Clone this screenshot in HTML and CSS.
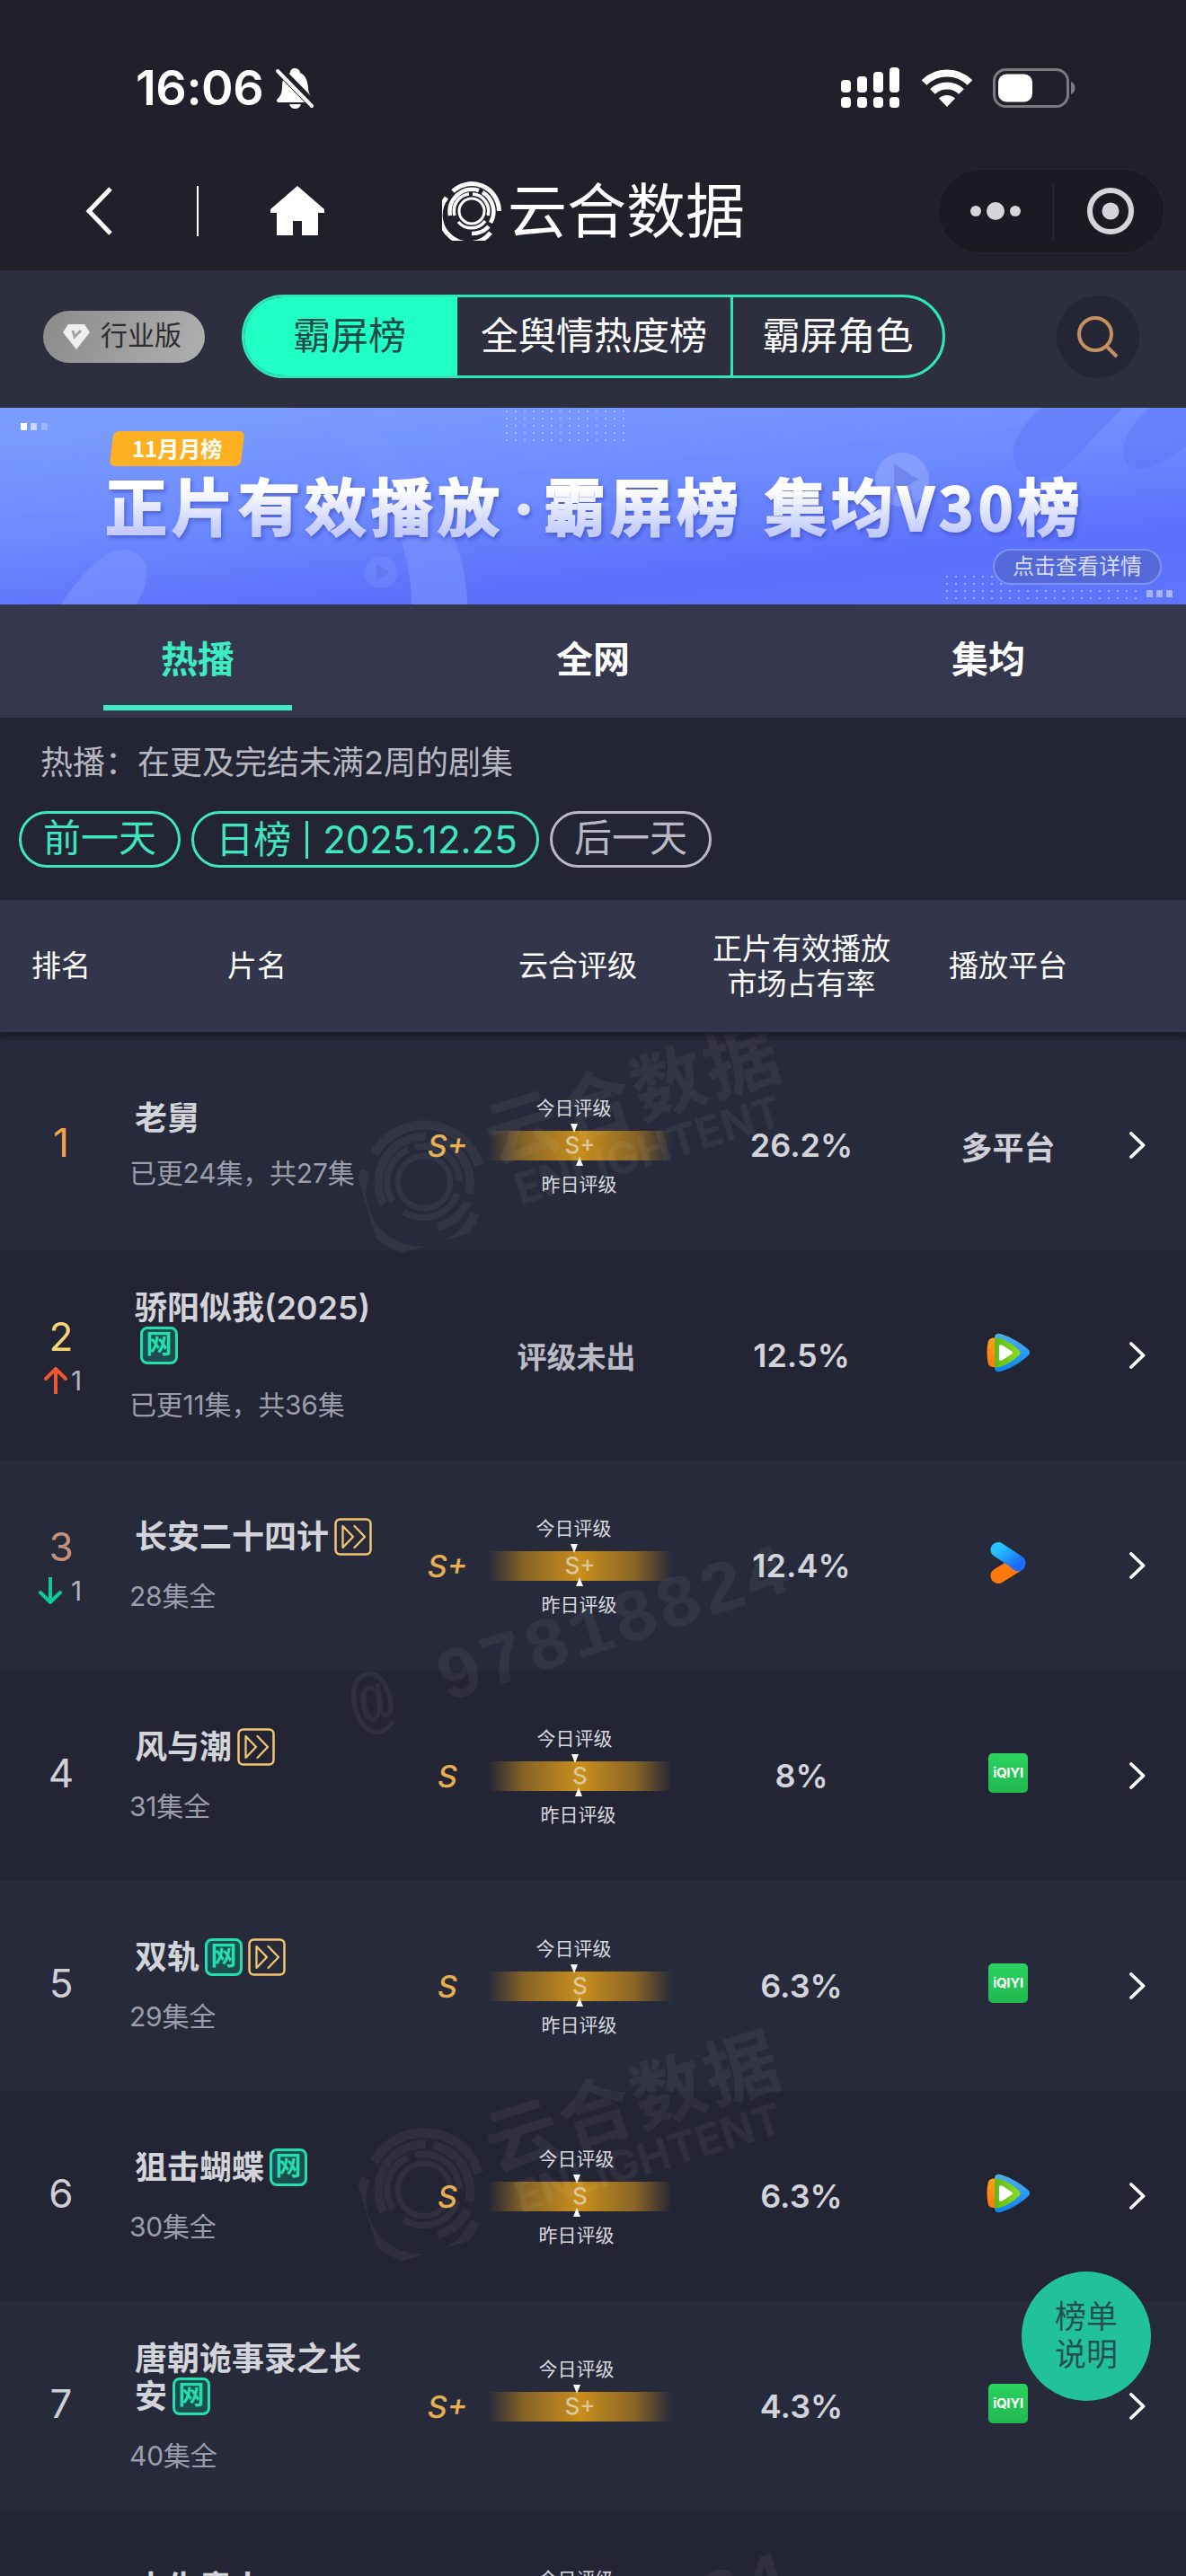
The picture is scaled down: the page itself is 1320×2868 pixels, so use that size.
FILE: index.html
```html
<!DOCTYPE html>
<html lang="zh-CN">
<head>
<meta charset="utf-8">
<title>云合数据</title>
<link rel="stylesheet" href="styles.css">
</head>

<body>
<!-- shared icons -->
<svg class="defs" width="0" height="0">
	<defs>
		<linearGradient id="blue" x1="0" y1="0" x2="0" y2="1"><stop offset="0" stop-color="#4fb0e8"/><stop offset="1" stop-color="#0a84f5"/></linearGradient>
		<linearGradient id="orange" x1="0" y1="0" x2="0" y2="1"><stop offset="0" stop-color="#ffa31a"/><stop offset="1" stop-color="#ff7410"/></linearGradient>
		<linearGradient id="lime" x1="0" y1="0" x2="1" y2="0"><stop offset="0" stop-color="#5cb81c"/><stop offset="1" stop-color="#8fdc1e"/></linearGradient>
		<linearGradient id="youku" x1="0" y1="0" x2="1" y2="1"><stop offset="0" stop-color="#25c4fa"/><stop offset="1" stop-color="#1a6cff"/></linearGradient>
	</defs>
	<symbol id="rings" viewBox="0 0 66 66">
		<g fill="none" stroke="currentColor">
			<path stroke-width="5" d="M12 11A30.500 30.500 0 0 1 63.500 33M5 18A31 31 0 0 0 54 57"/>
			<path stroke-width="4.500" d="M15 17A24 24 0 0 1 41 10M45 12A25 25 0 0 1 54 46M9 38A24 24 0 0 1 15 17M33 58A25 25 0 0 0 52 50"/>
			<path stroke-width="3.500" d="M14 38A19 19 0 0 1 30 14M34 14A19 19 0 0 1 51 38M18 45A19 19 0 0 0 48 44"/>
			<circle cx="33" cy="33" r="14" stroke-width="3"/>
		</g>
	</symbol>
	<symbol id="tencent" viewBox="0 0 48 44">
		<path fill="url(#blue)" d="M9 5C9 1 13 0 17 1.500C28 5 38 11 46 18C49 20.500 49 23 46 25.500C38 33 28 39 17 42.500C13 44 9 43 9 39Z"/>
		<path fill="url(#orange)" d="M2 9C4 5 8 5 12 6L15 37C11 39 4 39 2 35C0 27 0 17 2 9Z"/>
		<path fill="url(#lime)" d="M9 8C9 5 12 5 15 6C23 9 30 13 36 19C38 21 38 23 36 25C30 31 23 35 15 38C12 39 9 39 9 36Z"/>
		<path fill="#fff" d="M14 15C14 13 16 13 18 14L28 20.500C29.500 21.500 29.500 22.500 28 23.500L18 30C16 31 14 31 14 29Z"/>
	</symbol>
	<symbol id="yk" viewBox="0 0 40 48">
		<path fill="none" stroke="#ff7a0c" stroke-width="17" stroke-linecap="round" d="M9 38.500L29 26"/>
		<path fill="none" stroke="url(#youku)" stroke-width="17" stroke-linecap="round" stroke-linejoin="round" d="M9 9.500L31 24L31 25"/>
	</symbol>
	<symbol id="more" viewBox="0 0 18 30">
		<path fill="none" stroke="#fff" stroke-width="3.800" stroke-linecap="round" stroke-linejoin="round" d="M2 2L15.500 15L2 28"/>
	</symbol>
	<symbol id="ff" viewBox="0 0 42 42">
		<rect x="1.500" y="1.500" width="39" height="39" rx="5" fill="none" stroke="#f2c671" stroke-width="2.500"/>
		<path fill="none" stroke="#f2c671" stroke-width="2.300" stroke-linejoin="round" stroke-linecap="round" d="M9.500 9V33L21 21ZM22.500 9L34 21L22.500 33"/>
	</symbol>
</svg>

<div class="header">
	<div class="status">
		<span class="time">16:06</span>
		<svg class="bell" width="46" height="46" viewBox="0 0 46 46">
			<path fill="#fff" d="M23 1C27 1 29 4 29 6C36 9 37 16 38 22C38 29 41 32 43 35C44 37 43 39 41 39H6C3 39 2 37 4 35C8 31 9 27 9 21C9 13 12 8 18 6C18 3 20 1 23 1ZM17 41H30C29 44 27 46 23.500 46C20 46 18 44 17 41Z"/>
			<path stroke="#20202a" stroke-width="10" d="M3 0L44 42"/>
			<path stroke="#fff" stroke-width="4" stroke-linecap="round" d="M4 4L42 43"/>
		</svg>
		<svg class="signal" width="67" height="46" viewBox="0 0 67 46" fill="#fff">
			<rect x="0" y="14" width="11" height="14" rx="4"/><rect x="18" y="10" width="11" height="18" rx="4"/><rect x="36" y="5" width="11" height="23" rx="4"/><rect x="54" y="0" width="11" height="28" rx="4"/>
			<rect x="0" y="33" width="11" height="12" rx="4"/><rect x="18" y="33" width="11" height="12" rx="4"/><rect x="36" y="33" width="11" height="12" rx="4"/><rect x="54" y="33" width="11" height="12" rx="4"/>
		</svg>
		<svg class="wifi" width="58" height="42" viewBox="0 0 58 42">
			<g fill="none" stroke="#fff" stroke-width="8"><path d="M3.500 15A36 36 0 0 1 54.500 15"/><path d="M13 25A23 23 0 0 1 45 25"/></g>
			<path fill="#fff" d="M29 42L20 32.500A13 13 0 0 1 38 32.500Z"/>
		</svg>
		<svg class="battery" width="92" height="44" viewBox="0 0 92 44">
			<rect x="1.500" y="1.500" width="82" height="41" rx="13" fill="none" stroke="#7b7b82" stroke-width="3"/>
			<rect x="6" y="6.500" width="38" height="31" rx="9" fill="#fff"/>
			<path fill="#7b7b82" d="M87 15C93 17 93 27 87 29Z"/>
		</svg>
	</div>
	<div class="nav">
		<svg class="back" width="30" height="54" viewBox="0 0 30 54"><path fill="none" stroke="#fff" stroke-width="5" d="M28 2L4 27L28 52"/></svg>
		<span class="line"></span>
		<svg class="home" width="62" height="56" viewBox="0 0 62 56"><path fill="#fff" d="M31 0L61 26V30H54V55H36V39H26V55H8V30H1V26Z"/></svg>
		<svg class="logo" width="66" height="66"><use href="#rings"/></svg>
		<span class="brand">云合数据</span>
		<div class="capsule">
			<svg width="56" height="22" viewBox="0 0 56 22" fill="#d6d6da"><circle cx="6" cy="11" r="6"/><circle cx="28" cy="11" r="10"/><circle cx="50" cy="11" r="6"/></svg>
			<span class="split"></span>
			<svg width="54" height="54" viewBox="0 0 54 54"><circle cx="27" cy="27" r="23" fill="none" stroke="#d6d6da" stroke-width="6"/><circle cx="27" cy="27" r="9.500" fill="#d6d6da"/></svg>
		</div>
	</div>
</div>

<div class="toolbar">
	<div class="edition">
		<svg width="32" height="30" viewBox="0 0 32 30"><path fill="#efefef" d="M7 1H25L31 10L16 29L1 10Z"/><path fill="none" stroke="#a2a2a2" stroke-width="3" d="M12 8L14 15L21 8"/></svg>
		<span>行业版</span>
	</div>
	<div class="segment">
		<span class="seg seg1 on">霸屏榜</span>
		<span class="seg seg2">全舆情热度榜</span>
		<span class="seg seg3">霸屏角色</span>
	</div>
	<div class="search">
		<svg width="48" height="48" viewBox="0 0 48 48"><g fill="none" stroke="#c5905f" stroke-width="4"><circle cx="21" cy="21" r="18"/><path d="M33 34L45 46"/></g></svg>
	</div>
</div>

<div class="banner">
	<svg class="art" width="1320" height="219" viewBox="0 0 1320 219">
		<defs>
			<pattern id="dots" width="10" height="8" patternUnits="userSpaceOnUse"><rect x="3" y="3" width="2" height="2" fill="#a9bcff"/></pattern>
		</defs>
		<path fill="#5c78f5" opacity=".55" d="M1160 0C1130 25 1120 50 1134 70C1150 88 1180 75 1200 52C1225 25 1240 10 1250 0ZM1280 0C1250 25 1245 50 1255 64C1270 76 1300 60 1320 42V0Z"/>
		<path fill="#7b94ff" opacity=".6" d="M68 219C80 200 105 168 125 160C155 152 168 172 162 195C160 205 155 212 152 219ZM445 145H505C515 170 520 195 520 219H458C458 190 452 165 445 145Z"/>
		<path fill="#7b98ff" opacity=".35" d="M320 0H410C430 45 480 90 505 145H445C430 90 400 40 320 0Z"/>
		<circle cx="1004" cy="80" r="30" fill="#9cb2ff" opacity=".5"/>
		<path fill="#6f86f0" d="M995 62L1022 80L995 95Z"/>
		<circle cx="424" cy="183" r="18" fill="#7b90ff" opacity=".4"/>
		<path fill="#6378ee" d="M419 174L434 183L419 192Z"/>
		<rect x="555" y="0" width="141" height="40" fill="url(#dots)" opacity=".8"/>
		<rect x="1048" y="186" width="218" height="28" fill="url(#dots)" opacity=".8"/>
		<rect x="23" y="17" width="7" height="8" fill="#fff"/><rect x="34" y="17" width="7" height="8" fill="#fff" opacity=".6"/><rect x="46" y="17" width="7" height="8" fill="#fff" opacity=".25"/>
		<rect x="1276" y="203" width="7" height="8" fill="#fff" opacity=".45"/><rect x="1287" y="203" width="7" height="8" fill="#fff" opacity=".45"/><rect x="1298" y="203" width="7" height="8" fill="#fff" opacity=".45"/>
	</svg>
	<div class="month"><span>11月月榜</span></div>
	<div class="slogan">正片有效播放<i>·</i>霸屏榜<b></b>集均<em>V30</em>榜</div>
	<div class="detail">点击查看详情</div>
</div>

<div class="tabs">
	<div class="tab on"><span>热播</span></div>
	<div class="tab"><span>全网</span></div>
	<div class="tab"><span>集均</span></div>
</div>

<div class="filter">
	<div class="note">热播：在更及完结未满2周的剧集</div>
	<div class="days">
		<span class="day">前一天</span>
		<span class="day date">日榜<i></i>2025.12.25</span>
		<span class="day off">后一天</span>
	</div>
</div>

<div class="thead">
	<span>排名</span>
	<span>片名</span>
	<span class="th-grade">云合评级</span>
	<span>正片有效播放<br>市场占有率</span>
	<span>播放平台</span>
</div>

<div class="list">
	<div class="row">
		<div class="rank r1">1</div>
		<div class="name plain"><h3>老舅</h3><p>已更24集，共27集</p></div>
		<div class="grade">
			<span class="lv">S+</span>
			<div class="meter apart"><span class="today">今日评级</span><div class="bar">S+</div><span class="yest">昨日评级</span></div>
		</div>
		<div class="share">26.2%</div>
		<div class="plat">多平台</div>
		<svg class="more" width="18" height="30"><use href="#more"/></svg>
	</div>
	<div class="row">
		<div class="rank r2">2
			<div class="move"><svg width="26" height="30" viewBox="0 0 26 30"><path fill="none" stroke="#f0592f" stroke-width="4" stroke-linecap="round" d="M13 29V3M2 13L13 2L24 13"/></svg>1</div>
		</div>
		<div class="name"><h3>骄阳似我(2025)<span class="net">网</span></h3><p>已更11集，共36集</p></div>
		<div class="grade none">评级未出</div>
		<div class="share">12.5%</div>
		<div class="plat"><svg width="48" height="44"><use href="#tencent"/></svg></div>
		<svg class="more" width="18" height="30"><use href="#more"/></svg>
	</div>
	<div class="row">
		<div class="rank r3">3
			<div class="move down"><svg width="26" height="30" viewBox="0 0 26 30"><path fill="none" stroke="#12c99b" stroke-width="4" stroke-linecap="round" d="M13 1V27M2 17L13 28L24 17"/></svg>1</div>
		</div>
		<div class="name"><h3>长安二十四计<svg class="ff" width="42" height="42"><use href="#ff"/></svg></h3><p>28集全</p></div>
		<div class="grade">
			<span class="lv">S+</span>
			<div class="meter apart"><span class="today">今日评级</span><div class="bar">S+</div><span class="yest">昨日评级</span></div>
		</div>
		<div class="share">12.4%</div>
		<div class="plat"><svg width="40" height="48"><use href="#yk"/></svg></div>
		<svg class="more" width="18" height="30"><use href="#more"/></svg>
	</div>
	<div class="row">
		<div class="rank">4</div>
		<div class="name"><h3>风与潮<svg class="ff" width="42" height="42"><use href="#ff"/></svg></h3><p>31集全</p></div>
		<div class="grade">
			<span class="lv">S</span>
			<div class="meter near"><span class="today">今日评级</span><div class="bar">S</div><span class="yest">昨日评级</span></div>
		</div>
		<div class="share">8%</div>
		<div class="plat"><span class="iqiyi">iQIYI</span></div>
		<svg class="more" width="18" height="30"><use href="#more"/></svg>
	</div>
	<div class="row">
		<div class="rank">5</div>
		<div class="name"><h3>双轨<span class="net">网</span><svg class="ff" width="42" height="42"><use href="#ff"/></svg></h3><p>29集全</p></div>
		<div class="grade">
			<span class="lv">S</span>
			<div class="meter apart"><span class="today">今日评级</span><div class="bar">S</div><span class="yest">昨日评级</span></div>
		</div>
		<div class="share">6.3%</div>
		<div class="plat"><span class="iqiyi">iQIYI</span></div>
		<svg class="more" width="18" height="30"><use href="#more"/></svg>
	</div>
	<div class="row">
		<div class="rank">6</div>
		<div class="name"><h3>狙击蝴蝶<span class="net">网</span></h3><p>30集全</p></div>
		<div class="grade">
			<span class="lv">S</span>
			<div class="meter"><span class="today">今日评级</span><div class="bar">S</div><span class="yest">昨日评级</span></div>
		</div>
		<div class="share">6.3%</div>
		<div class="plat"><svg width="48" height="44"><use href="#tencent"/></svg></div>
		<svg class="more" width="18" height="30"><use href="#more"/></svg>
	</div>
	<div class="row">
		<div class="rank">7</div>
		<div class="name"><h3>唐朝诡事录之长安<span class="net">网</span></h3><p>40集全</p></div>
		<div class="grade">
			<span class="lv">S+</span>
			<div class="meter"><span class="today">今日评级</span><div class="bar">S+</div><span class="yest empty"></span></div>
		</div>
		<div class="share">4.3%</div>
		<div class="plat"><span class="iqiyi">iQIYI</span></div>
		<svg class="more" width="18" height="30"><use href="#more"/></svg>
	</div>
	<div class="row">
		<div class="rank"></div>
		<div class="name"><h3>大生意人</h3><p></p></div>
		<div class="grade">
			<span class="lv"></span>
			<div class="meter"><span class="today">今日评级</span><div class="bar"></div><span class="yest"></span></div>
		</div>
	</div>

	<!-- watermarks over the rows -->
	<div class="mark mark1"><svg width="138" height="138"><use href="#rings"/></svg><div><span class="cn">云合数据</span><span class="en">ENLIGHTENT</span></div></div>
	<div class="uid uid1">@ 97818824</div>
	<div class="mark mark2"><svg width="138" height="138"><use href="#rings"/></svg><div><span class="cn">云合数据</span><span class="en">ENLIGHTENT</span></div></div>
	<div class="uid uid2">@ 97818824</div>
</div>

<div class="help">榜单<br>说明</div>
</body>
</html>
```
FILE: styles.css
```css
* {
	box-sizing: border-box;
}
body {
	margin: 0px;
	width: 1320px;
	height: 2868px;
	overflow: hidden;
	position: relative;
	background: #232434;
	color: #fff;
	font-family: Inter, "Noto Sans CJK SC", sans-serif;
}
svg {
	display: block;
	flex: none;
}
.defs {
	position: absolute;
}

/* header */
.header {
	height: 301px;
	background: #20202a;
}
.status {
	display: flex;
	align-items: center;
	height: 187px;
	padding: 8px 123px 0 151px;
}
.time {
	width: 154px;
	font-size: 54px;
	font-weight: 600;
	letter-spacing: -.5px;
	white-space: nowrap;
}
.signal {
	margin-left: auto;
}
.wifi {
	margin-left: 22px;
}
.battery {
	margin-left: 22px;
}
.nav {
	display: flex;
	align-items: center;
	height: 96px;
	padding-left: 95px;
	padding-right: 23px;
}
.line {
	width: 2px;
	height: 56px;
	margin-left: 94px;
	background: #fff;
}
.home {
	margin-left: 79px;
}
.logo {
	margin-left: 130px;
}
.brand {
	margin-left: 7px;
	font-size: 66px;
	line-height: 98px;
}
.capsule {
	display: flex;
	align-items: center;
	width: 254px;
	height: 96px;
	margin-left: auto;
	padding-left: 35px;
	border: 2px solid #23232d;
	border-radius: 48px;
	background: #1a1a22;
}
.split {
	width: 1px;
	height: 64px;
	margin: 0 36px;
	background: #2a2a34;
}

/* toolbar */
.toolbar {
	display: flex;
	align-items: center;
	height: 153px;
	padding: 0 52px 6px 48px;
	background: #2d2f3f;
}
.edition {
	display: flex;
	align-items: center;
	width: 180px;
	height: 58px;
	padding-left: 21px;
	gap: 11px;
	border-radius: 29px;
	background: linear-gradient(110deg, #8b8b8b, #b0b0b0);
	color: #2d2d30;
	font-size: 30px;
	line-height: 54px;
	white-space: nowrap;
}
.edition span {
	padding-bottom: 4px;
}
.segment {
	display: flex;
	width: 783px;
	height: 93px;
	margin-left: 41px;
	border: 3px solid #2ee6b8;
	border-radius: 47px;
	overflow: hidden;
	font-size: 42px;
}
.seg {
	line-height: 85px;
	text-align: center;
}
.seg1 {
	width: 237px;
	padding-right: 3px;
}
.seg2 {
	width: 304px;
}
.seg3 {
	flex: 1;
	border-left: 3px solid #2ee6b8;
}
.seg.on {
	background: #20ffc5;
	color: #1f4a49;
}
.search {
	display: flex;
	align-items: center;
	justify-content: center;
	width: 92px;
	height: 92px;
	margin-left: auto;
	border-radius: 50%;
	background: #242535;
}

/* banner */
.banner {
	position: relative;
	display: flex;
	flex-direction: column;
	height: 219px;
	padding-top: 26px;
	background: linear-gradient(175deg, #7b9cff 8%, #6d8aff 45%, #5b70fb 75%, #5f75fc);
}
.art {
	position: absolute;
	left: 0px;
	top: 0px;
}
.month {
	z-index: 1;
	width: 146px;
	height: 39px;
	margin-left: 124px;
	border-radius: 6px;
	background: #fdb022;
	transform: skewX(-7deg);
	font-family: "Noto Sans CJK SC", sans-serif;
	font-size: 24px;
	font-weight: 700;
	line-height: 38px;
	text-align: center;
}
.month span {
	display: block;
	transform: skewX(7deg);
}
.slogan {
	z-index: 1;
	display: flex;
	align-items: baseline;
	height: 86px;
	margin-left: 117px;
	background: linear-gradient(#fff 30%, #c3ccff 85%);
	-webkit-background-clip: text;
	background-clip: text;
	color: transparent;
	-webkit-text-stroke: 2px transparent;
	filter: drop-shadow(2px 3px 2px rgba(50, 60, 180, .5));
	font-family: "Noto Sans CJK SC", sans-serif;
	font-size: 69px;
	font-weight: 700;
	letter-spacing: 5px;
	line-height: 84px;
	white-space: nowrap;
}
.slogan i {
	width: 44px;
	font-family: Inter, sans-serif;
	font-style: normal;
	letter-spacing: 0px;
	text-align: center;
}
.slogan b {
	width: 24px;
}
.slogan em {
	font-style: normal;
	font-size: 66px;
}
.detail {
	z-index: 1;
	align-self: flex-end;
	width: 188px;
	height: 40px;
	margin: 6px 27px 0 0;
	border: 2px solid #7d92f5;
	border-radius: 20px;
	background: #5468d8;
	color: #d5dcff;
	font-size: 24px;
	line-height: 35px;
	text-align: center;
}

/* tabs */
.tabs {
	display: grid;
	grid-template-columns: 440px 440px 440px;
	height: 126px;
	background: #35374d;
	font-size: 41px;
	font-weight: 600;
}
.tab {
	display: flex;
	justify-content: center;
	line-height: 122px;
}
.tab.on span {
	width: 210px;
	height: 118px;
	border-bottom: 6px solid #3decc2;
	color: #3decc2;
	text-align: center;
}

/* date filter */
.filter {
	height: 203px;
	padding: 24px 21px 0;
}
.note {
	margin-left: 24px;
	color: #b6b7c0;
	font-size: 36px;
	line-height: 52px;
}
.days {
	display: flex;
	gap: 12px;
	margin-top: 28px;
}
.day {
	width: 180px;
	height: 63px;
	border: 3px solid #3ee6bf;
	border-radius: 32px;
	color: #3ee6bf;
	font-size: 42px;
	line-height: 54px;
	text-align: center;
	white-space: nowrap;
}
.date {
	display: flex;
	align-items: center;
	justify-content: center;
	width: 387px;
	padding-left: 3px;
}
.date i {
	width: 3px;
	height: 42px;
	margin: 0 16px;
	background: #3ee6bf;
}
.day.off {
	border-color: #b9b9c4;
	color: #b9b9c4;
}

/* table */
.thead,
.row {
	display: grid;
	grid-template-columns: 136px 300px 350px 212px 248px 74px;
	align-items: center;
}
.thead {
	position: relative;
	height: 147px;
	background: #33354a;
	box-shadow: 0 3px 6px #191a28;
	font-size: 33px;
	line-height: 39px;
	text-align: center;
	z-index: 1;
}
.th-grade {
	padding-left: 64px;
}
.list {
	position: relative;
	height: 1719px;
	padding-top: 9px;
	overflow: hidden;
}
.row {
	height: 234px;
	background: #232434;
}
.row:nth-child(odd) {
	background: linear-gradient(#28293a, #262a3a 15%);
}
.rank {
	margin-top: -6px;
	color: #cfcfd8;
	font-size: 44px;
	line-height: 54px;
	text-align: center;
}
.r1 {
	color: #f0a24e;
}
.r2 {
	margin-top: 2px;
	color: #f7d674;
}
.r3 {
	margin-top: 2px;
	color: #c3927c;
}
.move {
	display: flex;
	align-items: center;
	justify-content: center;
	height: 44px;
	gap: 4px;
	padding-left: 4px;
	color: #b3b4be;
	font-size: 30px;
}
.move.down {
	gap: 10px;
	padding-left: 0px;
	padding-right: 2px;
}
.name h3 {
	width: 280px;
	margin: 0 0 25px 14px;
	color: #d3d3da;
	font-size: 36px;
	font-weight: 600;
	line-height: 42px;
}
.name p {
	height: 40px;
	margin: 0 0 0 8px;
	color: #9c9dab;
	font-size: 30px;
	letter-spacing: -.2px;
	line-height: 40px;
	white-space: nowrap;
}
.name.plain h3 {
	margin-bottom: 20px;
}
.net,
.ff {
	display: inline-block;
	width: 42px;
	height: 42px;
	margin-left: 6px;
	vertical-align: top;
}
.net {
	border: 3px solid #23dfae;
	border-radius: 8px;
	background: #1c4b50;
	color: #23dfae;
	font-size: 29px;
	line-height: 34px;
	text-align: center;
}
.grade {
	display: flex;
	align-items: center;
}
.grade.none {
	justify-content: center;
	padding-left: 61px;
	color: #b9bac4;
	font-size: 33px;
	font-weight: 600;
}
.lv {
	width: 107px;
	padding-left: 17px;
	color: #e6ae4e;
	font-size: 34px;
	font-style: italic;
	font-weight: 500;
	text-align: center;
}
/* --t and --y: how far each label stands from the bar's middle */
.meter {
	--t: -4px;
	--y: -4px;
	display: flex;
	flex-direction: column;
	align-items: center;
	width: 205px;
	padding-top: 2px;
	color: #d8d8de;
	font-size: 21px;
	line-height: 24px;
}
.apart {
	--t: -7px;
	--y: -1px;
}
.near {
	--t: -6px;
	--y: -2px;
}
.today,
.yest {
	position: relative;
	height: 24px;
}
.today {
	transform: translateX(var(--t));
}
.yest {
	transform: translateX(var(--y));
}
.today::after,
.yest::after {
	content: "";
	position: absolute;
	left: 50%;
	margin-left: -4px;
	border-left: 4px solid transparent;
	border-right: 4px solid transparent;
}
.today::after {
	top: 29px;
	border-top: 10px solid #fff;
}
.yest::after {
	top: -19px;
	border-bottom: 10px solid #fff;
}
.yest.empty::after {
	display: none;
}
.bar {
	width: 205px;
	height: 33px;
	margin: 13px 0 15px;
	background: linear-gradient(90deg, transparent, #886426 20%, #c98f1c 50%, #886426 80%, transparent);
	color: #dcc69a;
	font-size: 26px;
	font-weight: 500;
	line-height: 32px;
	text-align: center;
}
.share {
	color: #d3d3da;
	font-size: 36px;
	font-weight: 600;
	text-align: center;
}
.plat {
	display: flex;
	justify-content: center;
	color: #cfcfd7;
	font-size: 35px;
	font-weight: 600;
}
.plat svg,
.iqiyi {
	margin-bottom: 6px;
}
.iqiyi {
	width: 44px;
	height: 44px;
	border-radius: 5px;
	background: linear-gradient(#2bd35f, #20b84f);
	color: #fff;
	font-size: 15px;
	font-weight: 700;
	letter-spacing: -.3px;
	line-height: 43px;
	text-align: center;
}
.more {
	margin-left: 11px;
}

/* watermark */
.mark,
.uid {
	position: absolute;
	color: #fff;
	opacity: .05;
	white-space: nowrap;
	pointer-events: none;
}
.mark {
	display: flex;
	align-items: center;
	gap: 12px;
	left: 403px;
	transform: rotate(-17deg);
	transform-origin: 69px 69px;
}
.mark span {
	display: block;
	font-weight: 700;
}
.mark .cn {
	font-size: 82px;
	letter-spacing: 3px;
	line-height: 78px;
}
.mark .en {
	padding-left: 14px;
	font-size: 48px;
	line-height: 50px;
}
.mark1 {
	top: 98px;
}
.mark2 {
	top: 1220px;
}
.uid {
	left: 391px;
	font-family: "Liberation Mono", monospace;
	font-size: 82px;
	font-weight: 700;
	letter-spacing: 2px;
	line-height: 90px;
	transform: rotate(-18deg);
	transform-origin: 25px 45px;
}
.uid1 {
	top: 705px;
}
.uid2 {
	top: 1827px;
}

.help {
	position: absolute;
	left: 1137px;
	top: 2529px;
	z-index: 2;
	width: 144px;
	height: 144px;
	padding-top: 29px;
	border-radius: 50%;
	background: #22c19e;
	color: #24514f;
	font-size: 35px;
	line-height: 42px;
	text-align: center;
}
```
